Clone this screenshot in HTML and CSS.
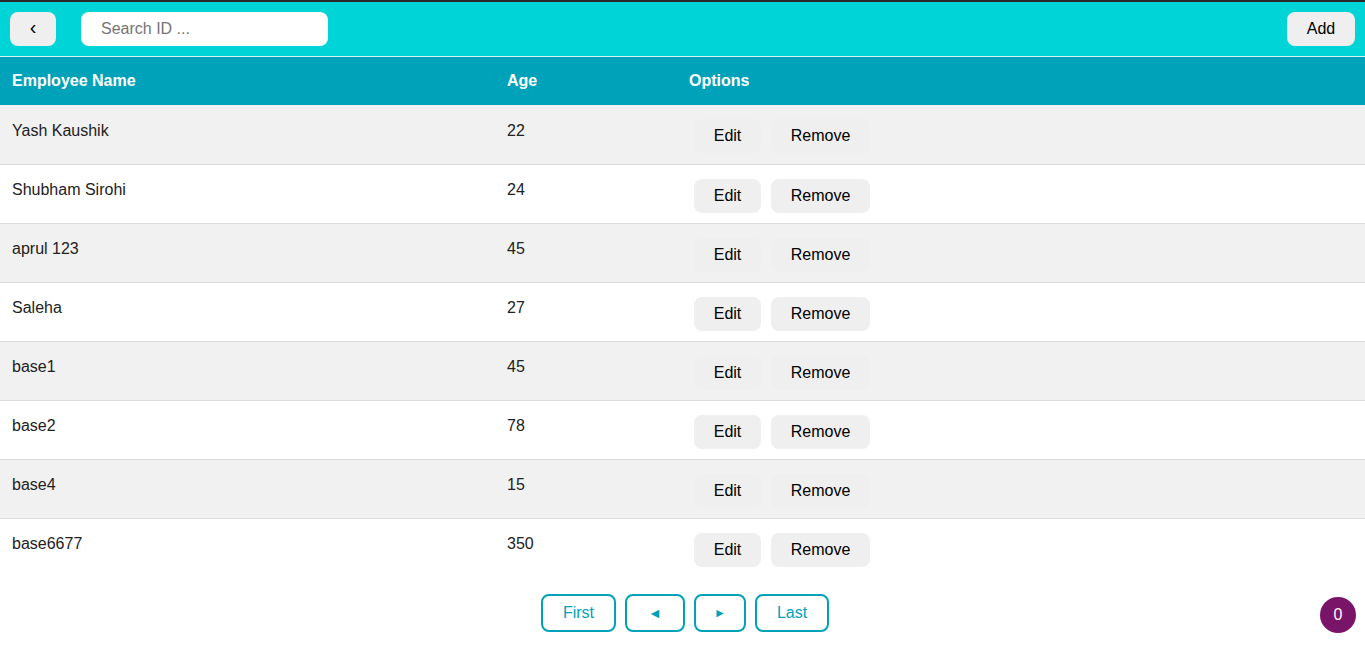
FILE: index.html
```html
<!DOCTYPE html>
<html>
<head>
<meta charset="utf-8">
<link rel="stylesheet" href="styles.css">
</head>
<body>
<header class="topbar">
  <button class="btn-back">&#8249;</button>
  <input class="search" type="text" placeholder="Search ID ...">
  <div class="spacer"></div>
  <button class="btn-add">Add</button>
</header>
<table class="grid">
  <colgroup>
    <col class="c-name"><col class="c-age"><col class="c-opt">
  </colgroup>
  <thead>
    <tr><th>Employee Name</th><th>Age</th><th>Options</th></tr>
  </thead>
  <tbody>
    <tr><td>Yash Kaushik</td><td>22</td><td class="opts"><button class="act">Edit</button><button class="act">Remove</button></td></tr>
    <tr><td>Shubham Sirohi</td><td>24</td><td class="opts"><button class="act">Edit</button><button class="act">Remove</button></td></tr>
    <tr><td>aprul 123</td><td>45</td><td class="opts"><button class="act">Edit</button><button class="act">Remove</button></td></tr>
    <tr><td>Saleha</td><td>27</td><td class="opts"><button class="act">Edit</button><button class="act">Remove</button></td></tr>
    <tr><td>base1</td><td>45</td><td class="opts"><button class="act">Edit</button><button class="act">Remove</button></td></tr>
    <tr><td>base2</td><td>78</td><td class="opts"><button class="act">Edit</button><button class="act">Remove</button></td></tr>
    <tr><td>base4</td><td>15</td><td class="opts"><button class="act">Edit</button><button class="act">Remove</button></td></tr>
    <tr><td>base6677</td><td>350</td><td class="opts"><button class="act">Edit</button><button class="act">Remove</button></td></tr>
  </tbody>
</table>
<nav class="pager">
  <button class="pg pg-first">First</button>
  <button class="pg pg-prev">&#9668;</button>
  <button class="pg pg-next">&#9658;</button>
  <button class="pg pg-last">Last</button>
</nav>
<div class="badge">0</div>
</body>
</html>
```

FILE: styles.css
```css
* { box-sizing: border-box; }
html, body { margin: 0; padding: 0; }
body {
  font-family: "Liberation Sans", Arial, sans-serif;
  font-size: 16px;
  color: #222;
  background: #fff;
  border-top: 2px solid #2a2a2a;
}
button { font-family: inherit; font-size: 16px; cursor: pointer; }

.topbar {
  display: flex;
  align-items: center;
  height: 55px;
  padding: 10px 10px 11px 10px;
  background: #00d4d7;
  border-bottom: 1px solid #d8f2f3;
}
.btn-back {
  width: 46px;
  height: 34px;
  border: none;
  border-radius: 8px;
  background: #efefef;
  color: #000;
  font-size: 20px;
  line-height: 1;
  padding: 0 0 3px 0;
}
.search {
  margin-left: 25px;
  width: 247px;
  height: 34px;
  border: none;
  border-radius: 8px;
  background: #fff;
  padding: 0 20px;
  font-family: inherit;
  font-size: 16px;
  outline: none;
}
.search::placeholder { color: #757575; }
.spacer { flex: 1; }
.btn-add {
  width: 68px;
  height: 34px;
  border: none;
  border-radius: 8px;
  background: #efefef;
  color: #000;
  padding: 0;
}

.grid {
  width: 100%;
  border-collapse: collapse;
  table-layout: fixed;
}
.c-name { width: 495px; }
.c-age { width: 182px; }
.grid th {
  background: #00a2b9;
  color: #fff;
  font-weight: bold;
  text-align: left;
  height: 48px;
  padding: 0 12px;
  line-height: 18px;
}
.grid td {
  height: 59px;
  padding: 16px 12px 0 12px;
  vertical-align: top;
  line-height: 18px;
  border-bottom: 1px solid #dcdcdc;
}
.grid tbody tr:first-child td { padding-top: 17px; }
.grid tbody tr:nth-child(odd) td { background: #f1f1f1; }
.grid tbody tr:last-child td { border-bottom: none; height: 58px; }
.grid td.opts { padding-top: 14px; padding-left: 12px; }
.grid tbody tr:first-child td.opts { padding-top: 14px; }
.act {
  height: 34px;
  margin: 0 5px;
  border: none;
  border-radius: 8px;
  background: #efefef;
  color: #000;
  vertical-align: top;
}
.act:first-child { width: 67px; padding: 0; }
.act:last-child { width: 99px; padding: 0; }

.pager {
  display: flex;
  justify-content: center;
  gap: 9px;
  margin-top: 18px;
  padding-left: 5px;
}
.pg {
  height: 38px;
  border: 2px solid #00a2b9;
  border-radius: 8px;
  background: #fff;
  color: #00a2b9;
  padding: 0;
}
.pg-first { width: 75px; }
.pg-prev { width: 60px; font-size: 14px; }
.pg-next { width: 52px; font-size: 12px; }
.pg-last { width: 74px; }

.badge {
  position: fixed;
  right: 9px;
  bottom: 31px;
  width: 36px;
  height: 36px;
  border-radius: 50%;
  background: #7a1468;
  color: #fff;
  display: flex;
  align-items: center;
  justify-content: center;
  font-size: 16px;
}
```
